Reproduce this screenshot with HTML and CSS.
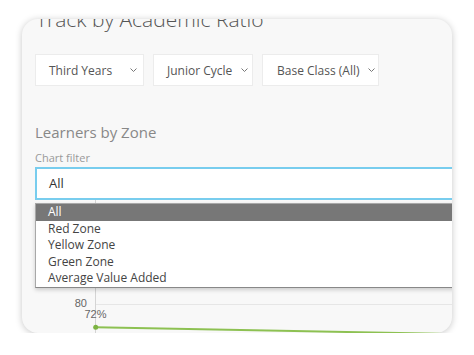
FILE: index.html
```html
<!DOCTYPE html>
<html lang="en">
    <head>
        <meta name="viewport" content="width=device-width, initial-scale=1">
        <title>Track by Academic Ratio</title>
        <link rel="stylesheet" href="styles.css">
    </head>
    <body>
        <div class="card">
            <h2 class="title">Track by Academic Ratio</h2>
            <div class="filters">
                <div class="pick w-year">
                    <span>Third Years</span>
                    <svg class="chev" width="7" height="4" viewBox="0 0 7 4"><polyline points="0.5,0.5 3.5,3.5 6.5,0.5"/></svg>
                </div>
                <div class="pick w-cycle">
                    <span>Junior Cycle</span>
                    <svg class="chev" width="7" height="4" viewBox="0 0 7 4"><polyline points="0.5,0.5 3.5,3.5 6.5,0.5"/></svg>
                </div>
                <div class="pick w-class">
                    <span>Base Class (All)</span>
                    <svg class="chev" width="7" height="4" viewBox="0 0 7 4"><polyline points="0.5,0.5 3.5,3.5 6.5,0.5"/></svg>
                </div>
            </div>
            <h3 class="section">Learners by Zone</h3>
            <label class="flabel" for="zoneFilter">Chart filter</label>
            <div class="field">
                <div class="input" id="zoneFilter">All</div>
                <ul class="options">
                    <li class="active">All</li>
                    <li>Red Zone</li>
                    <li>Yellow Zone</li>
                    <li>Green Zone</li>
                    <li>Average Value Added</li>
                </ul>
            </div>
            <svg class="chart" width="430" height="133" viewBox="0 0 430 133">
                <line class="grid" x1="73.5" y1="104.5" x2="430" y2="104.5"/>
                <line class="axis" x1="73.5" y1="0" x2="73.5" y2="133"/>
                <text class="tick" x="65" y="106.5" text-anchor="end">80</text>
                <text class="tick" x="73.5" y="117.5" text-anchor="middle">72%</text>
                <line class="trend" x1="73.7" y1="127.3" x2="432" y2="134"/>
                <circle class="dot" cx="73.7" cy="127.3" r="2.5"/>
            </svg>
        </div>
    </body>
</html>
```

FILE: styles.css
```css
body, html {
    padding: 0;
    margin: 0;
    background: #fff;
    font-family: "Open Sans", sans-serif;
}
* {
    box-sizing: border-box;
}
.card {
    margin: 19px 0 0 22px;
    width: 430px;
    height: 314px;
    padding-left: 13px;
    border-radius: 16px;
    overflow: hidden;
    background: #f8f8f8;
    box-shadow: 0 1px 7px rgba(0, 0, 0, 0.22);
}
.title {
    margin: -13px 0 0 1px;
    font-size: 21px;
    line-height: 26px;
    font-weight: 300;
    color: #555;
}
.filters {
    display: flex;
    gap: 9px;
    margin-top: 22px;
}
.pick {
    display: flex;
    align-items: center;
    justify-content: space-between;
    height: 32px;
    padding: 0 6px 0 13px;
    background: #fff;
    border: 1px solid #ececec;
    font-size: 12px;
    color: #555;
}
.w-year {
    width: 109px;
}
.w-cycle {
    width: 100px;
    padding-right: 4px;
}
.w-class {
    width: 117px;
    padding-left: 14px;
    padding-right: 3px;
}
.chev polyline {
    fill: none;
    stroke: #777;
    stroke-width: 1;
}
.section {
    margin: 36px 0 0 0;
    font-size: 15px;
    line-height: 20px;
    font-weight: 400;
    color: #888;
}
.flabel {
    display: block;
    margin-top: 9px;
    font-size: 11px;
    line-height: 14px;
    color: #9a9a9a;
}
.field {
    position: relative;
    margin: 2px -12px 0 0;
}
.input {
    height: 33px;
    padding-left: 12px;
    border: 2px solid #78cdee;
    background: #fff;
    font-size: 13px;
    line-height: 29px;
    color: #333;
}
.options {
    position: absolute;
    top: calc(100% + 3px);
    left: 0;
    right: 0;
    margin: 0;
    padding: 0;
    list-style: none;
    background: #fff;
    border: 1px solid #a8a8a8;
    border-bottom-color: #888;
    box-shadow: 0 2px 4px rgba(0, 0, 0, 0.18);
    z-index: 2;
}
.options li {
    height: 16.6px;
    padding-left: 12px;
    font-size: 12px;
    line-height: 16.6px;
    color: #444;
}
.options li.active {
    background: #777;
    color: #fff;
}
.chart {
    display: block;
    margin-left: -13px;
}
.chart .axis {
    stroke: #d4d4d4;
    stroke-width: 1;
}
.chart .grid {
    stroke: #e6e6e6;
    stroke-width: 1;
}
.chart .tick {
    font-family: "Liberation Sans", Arial, sans-serif;
    font-size: 11px;
    fill: #666;
}
.chart .trend {
    stroke: #8dc152;
    stroke-width: 2;
}
.chart .dot {
    fill: #7cb342;
}
```
